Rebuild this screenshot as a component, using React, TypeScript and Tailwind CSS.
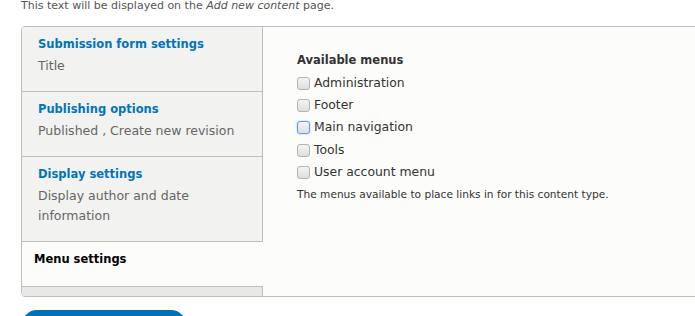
import React from "react";

const tabs = [
  { title: "Submission form settings", summary: "Title" },
  { title: "Publishing options", summary: "Published , Create new revision" },
  { title: "Display settings", summary: "Display author and date information" },
];

const menus = ["Administration", "Footer", "Main navigation", "Tools", "User account menu"];

export default function App() {
  return (
    <div className="w-[695px] h-[316px] overflow-hidden bg-white font-['DejaVu_Sans',sans-serif] text-[#333]">
      <p className="pl-[21px] text-[11px] leading-[12px] text-[#555] mb-[14px]">
        This text will be displayed on the <em>Add new content</em> page.
      </p>

      <div className="ml-[21px] w-[720px] flex border border-[#bfbfba] rounded-[4px] overflow-hidden">
        {/* Tab list */}
        <div className="w-[241px] shrink-0 flex flex-col bg-[#e8e8e6]">
          {tabs.map(t => (
            <div key={t.title} className="bg-[#f2f2f0] border-b border-r border-[#bfbfba] pl-[16px] pr-[15px] pt-[7px] pb-[15px]">
              <div className="text-[#0074bd] font-bold text-[11.5px] leading-[20px] mb-[2px]">{t.title}</div>
              <div className="text-[#666] text-[12.5px] leading-[20px] w-[200px]">{t.summary}</div>
            </div>
          ))}
          <div className="bg-[#fcfcfa] border-b border-[#bfbfba] pl-[12px] pt-[7px] pb-[17px] w-[242px]">
            <div className="text-black font-bold text-[11.5px] leading-[20px]">Menu settings</div>
          </div>
          <div className="h-[9px] border-r border-[#bfbfba]" />
        </div>

        {/* Pane */}
        <div className="flex-1 bg-[#fcfcfa] pl-[34px] pt-[23px]">
          <div className="font-bold text-[11.5px] leading-[20px] text-[#333]">Available menus</div>
          <div className="mt-[2px]">
            {menus.map(m => (
              <label key={m} className="flex items-center h-[22.3px] gap-[4px] text-[12.4px] text-[#333]">
                <span
                  className={
                    m === "Main navigation"
                      ? "w-[13px] h-[13px] rounded-[3px] border border-[#5b9dea] bg-gradient-to-b from-[#f4f4f4] to-[#dedede] shadow-[0_0_2px_#9cc3f2]"
                      : "w-[13px] h-[13px] rounded-[3px] border border-[#b3b3b3] bg-gradient-to-b from-[#f4f4f4] to-[#dedede]"
                  }
                />
                {m}
              </label>
            ))}
          </div>
          <div className="mt-[3px] text-[10.6px] leading-[16px] text-[#333]">
            The menus available to place links in for this content type.
          </div>
        </div>
      </div>

      <div className="ml-[22px] mt-[13px] w-[164px] h-[30px] rounded-full bg-[#0071b8]" />
    </div>
  );
}
